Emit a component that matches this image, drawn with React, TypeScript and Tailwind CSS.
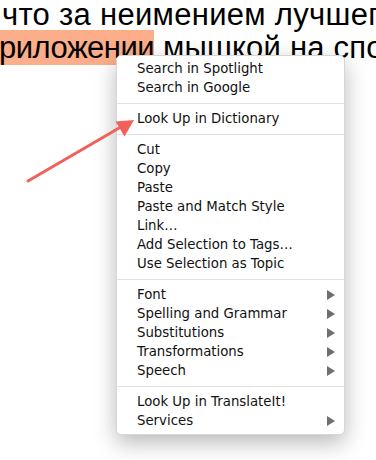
import React from "react";

type Item = { label: string; sub?: boolean } | "sep";

const items: Item[] = [
  { label: "Search in Spotlight" },
  { label: "Search in Google" },
  "sep",
  { label: "Look Up in Dictionary" },
  "sep",
  { label: "Cut" },
  { label: "Copy" },
  { label: "Paste" },
  { label: "Paste and Match Style" },
  { label: "Link…" },
  { label: "Add Selection to Tags…" },
  { label: "Use Selection as Topic" },
  "sep",
  { label: "Font", sub: true },
  { label: "Spelling and Grammar", sub: true },
  { label: "Substitutions", sub: true },
  { label: "Transformations", sub: true },
  { label: "Speech", sub: true },
  "sep",
  { label: "Look Up in TranslateIt!" },
  { label: "Services", sub: true },
];

function SubArrow() {
  return (
    <svg width="8" height="10" viewBox="0 0 8 10" className="shrink-0">
      <path d="M0 0 L8 5 L0 10 Z" fill="#6e6e6e" />
    </svg>
  );
}

export default function App() {
  return (
    <div className="relative w-[376px] h-[460px] overflow-hidden bg-white">
      <div
        className="text-[31px] leading-[33px] text-black whitespace-nowrap -mt-[2px]"
        style={{ fontFamily: '"Liberation Sans", Arial, sans-serif' }}
      >
        <div className="pl-[2px] tracking-[0.3px]">что за неимением лучшего</div>
        <div className="-ml-[1px] tracking-[0.2px]">
          <span className="bg-[#fcae8b] tracking-[-0.5px]">риложении</span> мышкой на спо
        </div>
      </div>

      <div
        className="absolute left-[116px] top-[55px] w-[229px] h-[380px] bg-white rounded-[5px] border border-[#d6d6d6] shadow-[0_8px_22px_rgba(0,0,0,0.28)] pt-[3px] pb-[4px] flex flex-col text-[13.3px] text-[#111]"
        style={{ fontFamily: '"DejaVu Sans", "Lucida Grande", sans-serif' }}
      >
        {items.map((it, i) =>
          it === "sep" ? (
            <div key={i} className="h-[12px] flex items-center">
              <div className="h-px w-full bg-[#e2e2e2]" />
            </div>
          ) : (
            <div
              key={i}
              className="h-[19px] leading-[19px] flex items-center justify-between pl-[20px] pr-[9px]"
            >
              <span>{it.label}</span>
              {it.sub && <SubArrow />}
            </div>
          )
        )}
      </div>

      <svg
        className="absolute left-0 top-0 pointer-events-none"
        width="376"
        height="460"
        viewBox="0 0 376 460"
      >
        <line
          x1="28"
          y1="181"
          x2="120"
          y2="127.5"
          stroke="#f2605a"
          strokeWidth="3"
          strokeLinecap="round"
        />
        <path d="M134 120 L115.5 121.5 L124.5 136.5 Z" fill="#f2605a" />
      </svg>
    </div>
  );
}
